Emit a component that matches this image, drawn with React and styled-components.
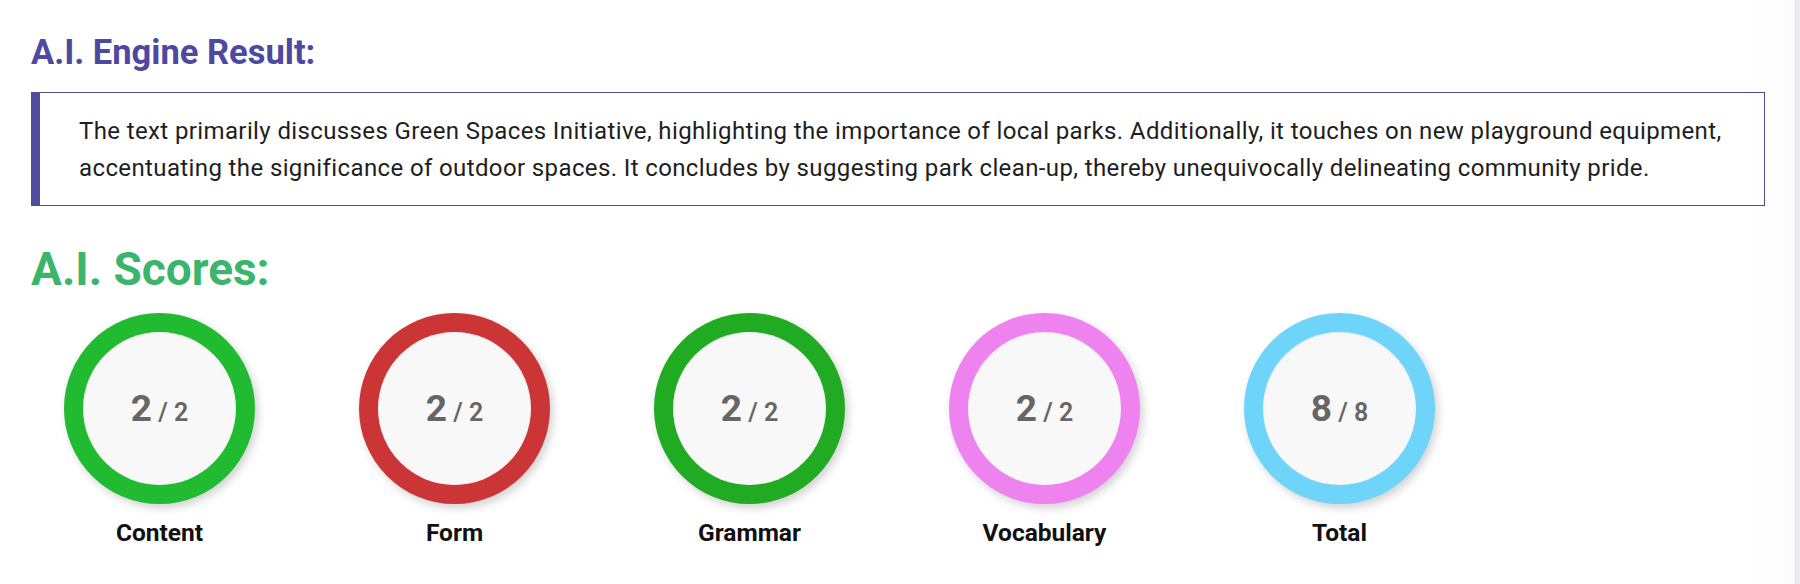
import React from 'react';
import styled, { createGlobalStyle } from 'styled-components';

const GlobalStyle = createGlobalStyle`
  html, body {
    margin: 0;
    padding: 0;
    background: #ffffff;
    font-family: Roboto, "Liberation Sans", Arial, sans-serif;
  }
`;

const scores = [
  { label: 'Content', value: 2, max: 2, color: '#21bb32' },
  { label: 'Form', value: 2, max: 2, color: '#cc3535' },
  { label: 'Grammar', value: 2, max: 2, color: '#20ab22' },
  { label: 'Vocabulary', value: 2, max: 2, color: '#ee82ee' },
  { label: 'Total', value: 8, max: 8, color: '#6ed4fa' },
];

const App = () => {
  return (
    <>
      <GlobalStyle />
      <Page>
        <Main>
          <EngineTitle>A.I. Engine Result:</EngineTitle>
          <ResultBox>
            <p>
              The text primarily discusses Green Spaces Initiative, highlighting the importance of local parks. Additionally, it touches on new playground equipment, accentuating the significance of outdoor spaces. It concludes by suggesting park clean-up, thereby unequivocally delineating community pride.
            </p>
          </ResultBox>
          <ScoresTitle>A.I. Scores:</ScoresTitle>
          <ScoreRow>
            {scores.map((s) => (
              <ScoreItem key={s.label}>
                <Ring $color={s.color}>
                  <Inner>
                    <Big>{s.value}</Big>
                    <Small> / {s.max}</Small>
                  </Inner>
                </Ring>
                <Label>{s.label}</Label>
              </ScoreItem>
            ))}
          </ScoreRow>
        </Main>
        <ScrollTrack />
      </Page>
    </>
  );
};

const Page = styled.div`
  display: flex;
  min-height: 584px;
  width: 1800px;
`;

const Main = styled.main`
  flex: 1;
  padding: 32px 30px 40px 31px;
  background: linear-gradient(to right, #ffffff 97%, #fcfcfc 100%);
`;

const ScrollTrack = styled.div`
  width: 4px;
  background: #ececee;
  border-left: 1px solid #e2e2e6;
`;

const EngineTitle = styled.h2`
  margin: 0;
  font-size: 34.5px;
  line-height: 40px;
  font-weight: 700;
  color: #4d49a0;
`;

const ResultBox = styled.div`
  margin-top: 20px;
  border: 1px solid #4f4c86;
  border-left: 9px solid #4f4ba0;
  padding: 20px 30px 18px 39px;

  p {
    margin: 0;
    font-size: 24px;
    letter-spacing: 0.38px;
    line-height: 37px;
    color: #1e1e1e;
  }
`;

const ScoresTitle = styled.h2`
  margin: 36px 0 0;
  font-size: 46px;
  line-height: 54px;
  font-weight: 700;
  color: #3cb56c;
`;

const ScoreRow = styled.div`
  display: flex;
  gap: 104px;
  margin-top: 17px;
  padding-left: 33px;
`;

const ScoreItem = styled.div`
  display: flex;
  flex-direction: column;
  align-items: center;
  gap: 15px;
  width: 191px;
`;

const Ring = styled.div`
  width: 191px;
  height: 191px;
  box-sizing: border-box;
  border-radius: 50%;
  background: ${(p) => p.$color};
  padding: 19px;
  box-shadow: 3px 4px 9px rgba(0, 0, 0, 0.18);
`;

const Inner = styled.div`
  width: 100%;
  height: 100%;
  border-radius: 50%;
  background: #f8f8f8;
  display: flex;
  align-items: center;
  justify-content: center;
  color: #666666;
  box-shadow: inset 0 1px 3px rgba(0, 0, 0, 0.06);
`;

const Big = styled.span`
  font-size: 37px;
  font-weight: 700;
  line-height: 1;
`;

const Small = styled.span`
  font-size: 25px;
  font-weight: 600;
  line-height: 1;
  white-space: pre;
  align-self: center;
  margin-top: 8px;
`;

const Label = styled.div`
  font-size: 24.5px;
  line-height: 28px;
  font-weight: 700;
  color: #111111;
`;

export default App;
